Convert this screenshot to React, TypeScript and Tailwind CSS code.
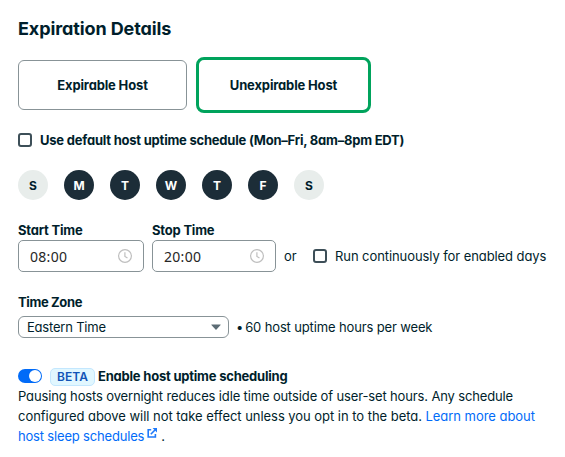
import React from "react";

const days = [
  { label: "S", on: false },
  { label: "M", on: true },
  { label: "T", on: true },
  { label: "W", on: true },
  { label: "T", on: true },
  { label: "F", on: true },
  { label: "S", on: false },
];

function Checkbox() {
  return <span className="size-[14px] shrink-0 rounded-[3px] border-2 border-[#3d4f58] bg-white" />;
}

function ClockIcon() {
  return (
    <svg width="14" height="14" viewBox="0 0 14 14" fill="none" stroke="#bfbfbf" strokeWidth="1.2">
      <circle cx="7" cy="7" r="6.4" />
      <path d="M6.9 3.2v4.2l2.6 1.6" />
    </svg>
  );
}

function TimeField({ label, value, width }: { label: string; value: string; width: string }) {
  return (
    <div className={width}>
      <div className="h-[17px] leading-[15px] font-bold tracking-[-0.2px] whitespace-nowrap">{label}</div>
      <div className="flex h-[32px] items-center justify-between rounded-[5px] border border-[#889397] px-[11px]">
        <span className="font-['Noto_Sans',sans-serif] text-[14px] tracking-[0.3px] text-[#262626]">{value}</span>
        <ClockIcon />
      </div>
    </div>
  );
}

export default function App() {
  return (
    <div className="h-[457px] w-[565px] overflow-hidden bg-white pl-[18px] font-['Inter',sans-serif] text-[13px] text-[#001e2b] [font-feature-settings:'cv11']">
      <h2 className="pt-[17px] text-[18px] leading-[24px] font-bold tracking-[-0.1px]">Expiration Details</h2>
      <div className="mt-[16px] flex h-[56px] items-center gap-[9px]">
        <div className="flex h-[50px] w-[169px] items-center justify-center rounded-[6px] border border-[#889397] pt-[2px] font-bold tracking-[-0.15px]">Expirable Host</div>
        <div className="flex h-[56px] w-[175px] items-center justify-center rounded-[8px] border-[3px] border-[#00a35c] pt-[2px] font-bold tracking-[-0.15px]">Unexpirable Host</div>
      </div>
      <div className="mt-[17px] flex h-[20px] items-center gap-[8px] font-bold tracking-[-0.22px]">
        <Checkbox />
        <span className="pt-[2px] whitespace-nowrap">Use default host uptime schedule (Mon–Fri, 8am–8pm EDT)</span>
      </div>
      <div className="mt-[20px] flex gap-[16px]">
        {days.map((d, i) => (
          <span
            key={i}
            className={`flex size-[30px] items-center justify-center rounded-full pt-[2px] text-[12px] font-bold ${d.on ? "bg-[#1c2d38] text-white" : "bg-[#e8edeb]"}`}
          >
            {d.label}
          </span>
        ))}
      </div>
      <div className="mt-[23px] flex items-end">
        <TimeField label="Start Time" value="08:00" width="w-[126px]" />
        <div className="w-[8px]" />
        <TimeField label="Stop Time" value="20:00" width="w-[124px]" />
        <div className="flex h-[32px] items-center pl-[8px]">
          <span className="w-[29px] pt-[2px]">or</span>
          <Checkbox />
          <span className="ml-[8px] pt-[2px] tracking-[-0.08px] whitespace-nowrap">Run continuously for enabled days</span>
        </div>
      </div>
      <div className="mt-[21px] h-[20px] leading-[18px] font-bold tracking-[-0.36px]">Time Zone</div>
      <div className="mt-[3px] flex h-[22px] items-center">
        <div className="flex h-[22px] w-[211px] items-center justify-between rounded-[6px] border border-[#889397] pr-[7px] pl-[8px]">
          <span className="pt-[2px] tracking-[-0.2px]">Eastern Time</span>
          <svg width="10" height="6" viewBox="0 0 10 6" fill="#5c6c75"><path d="M.6.5h8.8a.3.3 0 0 1 .2.5L5.5 5.4a.7.7 0 0 1-1 0L.4 1a.3.3 0 0 1 .2-.5z" /></svg>
        </div>
        <span className="ml-[7px] flex gap-[2px] pt-[2px] tracking-[-0.14px] whitespace-nowrap">
          <span>•</span>
          <span>60 host uptime hours per week</span>
        </span>
      </div>
      <div className="mt-[28px] flex h-[20px] items-center">
        <span className="flex h-[14px] w-[24px] items-center justify-end rounded-full bg-[#016bf8] pr-px">
          <span className="size-[12px] rounded-full bg-white" />
        </span>
        <span className="mt-[2px] ml-[8px] flex h-[18px] w-[45px] items-center justify-center rounded-[5px] border border-[#c3e7fe] bg-[#e1f7ff] text-[12px] font-semibold text-[#1254b7]">BETA</span>
        <span className="ml-[3px] pt-[2px] font-bold tracking-[-0.21px] whitespace-nowrap">Enable host uptime scheduling</span>
      </div>
      <div className="leading-[20px] whitespace-nowrap">
        <div className="tracking-[-0.14px]">Pausing hosts overnight reduces idle time outside of user-set hours. Any schedule</div>
        <div className="tracking-[-0.04px]">
          <span>configured above will not take effect unless you opt in to the beta.</span>{" "}
          <span className="text-[#016bf8]">Learn more about</span>
        </div>
        <div className="flex">
          <span className="tracking-[-0.18px] text-[#016bf8]">host sleep schedules</span>
          <svg className="mt-[2px] ml-[3px]" width="10" height="10" viewBox="0 0 10 10" fill="none" stroke="#1f7afa" strokeWidth="1.6">
            <path d="M4.2 1.8H1.2v7.2h7.2V6M3.8 6.2l4.4-4.4" />
            <path d="M5.6 0H10v4.4z" fill="#1f7afa" stroke="none" />
          </svg>
          <span className="ml-[4px]">.</span>
        </div>
      </div>
    </div>
  );
}
